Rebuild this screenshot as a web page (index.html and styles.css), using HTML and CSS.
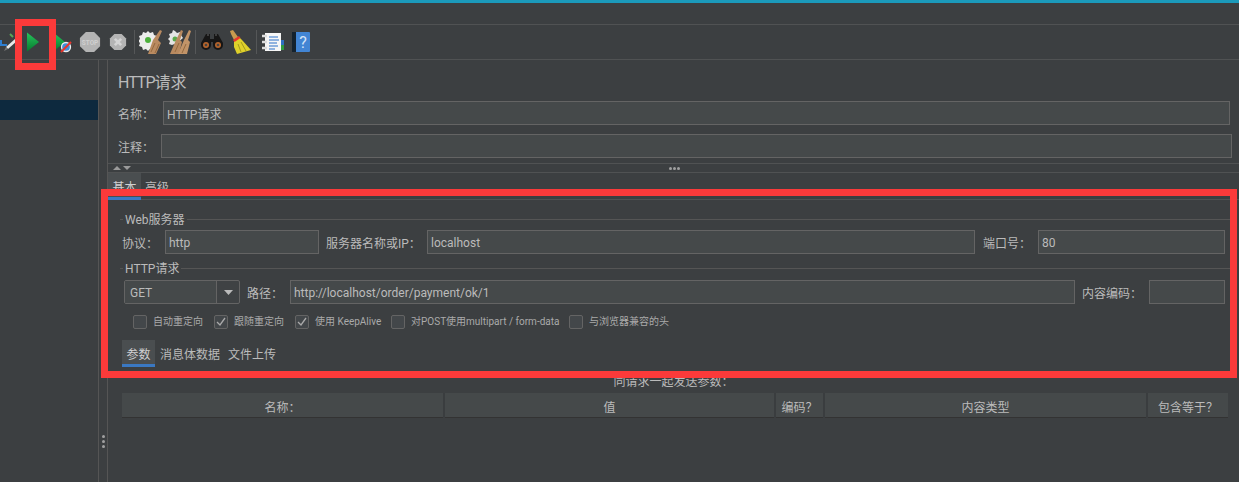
FILE: index.html
```html
<!DOCTYPE html>
<html lang="zh">
<head>
    <meta charset="UTF-8">
    <title>HTTP请求</title>
    <link rel="stylesheet" href="styles.css">
</head>
<body>

<div class="topbar"></div>
<div class="menubar"></div>

<div class="toolbar">
    <span class="tool tool-first">
        <svg width="22" height="22" viewBox="0 0 22 22"><path d="M11 16l9-8 2 2-9 8z" fill="#e8e8e8"/><path d="M20 8l2-2 2 2-2 2z" fill="#5aa55a"/><path d="M11 16l-2 4 4-2z" fill="#777"/><path d="M6 9v5h6" fill="none" stroke="#2f7fd0" stroke-width="2"/><path d="M15 3l3 3" stroke="#5aa55a" stroke-width="2"/></svg>
    </span>
    <span class="tool">
        <svg width="22" height="22" viewBox="0 0 22 22"><defs><linearGradient id="green" x1="0" y1="0" x2="0" y2="1"><stop offset="0" stop-color="#27c45c"/><stop offset="1" stop-color="#067a2e"/></linearGradient></defs><path d="M4 1.500L16 11 4 20.500z" fill="url(#green)"/></svg>
    </span>
    <span class="tool">
        <svg width="22" height="22" viewBox="0 0 22 22"><path d="M3 2l11 9-11 9z" fill="url(#green)"/><circle cx="15" cy="16" r="4.500" fill="#3d8fdc" stroke="#eee" stroke-width="1.300"/><path d="M10 21L20 11" stroke="#e8352c" stroke-width="2"/></svg>
    </span>
    <span class="tool">
        <svg width="22" height="22" viewBox="0 0 24 24"><path d="M7.500 1h9L23 7.500v9L16.500 23h-9L1 16.500v-9z" fill="#b4b4b4"/><text x="12" y="15" class="stop-text">STOP</text></svg>
    </span>
    <span class="tool">
        <svg width="18" height="18" viewBox="0 0 20 20"><path d="M6 1h8l5 5v8l-5 5H6l-5-5V6z" fill="#b4b4b4"/><path d="M6.500 6.500l7 7m0-7l-7 7" stroke="#d4d4d4" stroke-width="3"/></svg>
    </span>
    <span class="tool-sep"></span>
    <span class="tool">
        <svg width="24" height="24" viewBox="0 0 24 24"><path d="M9 1l2 2 3-1 1 3 3 1-1 3 2 2-2 2 1 3-3 1-1 3-3-1-2 2-2-2-3 1-1-3-3-1 1-3-2-2 2-2-1-3 3-1 1-3 3 1z" fill="#ececec"/><circle cx="9" cy="10" r="3" fill="#4caf3c"/><path d="M21 0l2 1-4 9 3 3-5 11H9l5-14z" fill="#b98a60"/><path d="M12 22l4-9m0 10l4-9" stroke="#94693f"/></svg>
    </span>
    <span class="tool">
        <svg width="24" height="24" viewBox="0 0 24 24"><path d="M8 1l2 2 3-1 1 3 2 3-6 5-5 2-3-1 1-3-2-2 2-2-1-3 3-1 1-3z" fill="#e4e4e4"/><circle cx="8" cy="9" r="2.500" fill="#5aa84a"/><path d="M14 0l2 1-3 9 2 2-3 12H3l6-14z" fill="#b98a60"/><path d="M22 0l2 1-3 9 2 2-3 12h-9l6-14z" fill="#c29468"/><path d="M8 22l4-9m3 10l4-9" stroke="#94693f"/></svg>
    </span>
    <span class="tool-sep"></span>
    <span class="tool">
        <svg width="24" height="16" viewBox="0 0 24 16"><path d="M6 0h4v5h4V0h4l5 9v2a5 5 0 0 1-10 0V8h-2v3a5 5 0 0 1-10 0V9z" fill="#161616"/><path d="M7 1h2M15 1h2" stroke="#666"/><circle cx="6" cy="11" r="3" fill="#b4642c"/><circle cx="18" cy="11" r="3" fill="#b4642c"/><circle cx="6" cy="11" r="1.300" fill="#444"/><circle cx="18" cy="11" r="1.300" fill="#444"/></svg>
    </span>
    <span class="tool">
        <svg width="22" height="24" viewBox="0 0 22 24"><path d="M1 1l3-1 5 7-4 3-3-6z" fill="#c89a4e"/><path d="M5 10l5-3 3 3 9 10-14 4-3-7z" fill="#dfd02a"/><path d="M4 10l6-4 1.500 2-6 4z" fill="#e8352c"/><path d="M9 14l3 8m0-10l5 9" stroke="#a49a1c"/></svg>
    </span>
    <span class="tool-sep"></span>
    <span class="tool">
        <svg width="22" height="20" viewBox="0 0 22 20"><rect x="3" y="1" width="16" height="18" fill="#f6f6f6"/><path d="M7 5h9M7 8h10M7 11h8M7 14h9M7 17h6" stroke="#2a70c8" stroke-width="1.200"/><path d="M0 4h5M0 10h5M0 16h5" stroke="#dcdcdc" stroke-width="2.500"/><rect x="19" y="8" width="3" height="5" fill="#2f6fc0"/><rect x="19" y="13" width="3" height="5" fill="#2f9a3f"/></svg>
    </span>
    <span class="tool">
        <svg width="18" height="20" viewBox="0 0 18 20"><rect x="0" y="0" width="18" height="20" rx="1" fill="#4285d4"/><rect x="0" y="0" width="4" height="20" fill="#14222e"/><text x="11" y="16" class="help-text">?</text></svg>
    </span>
</div>

<div class="workspace">
    <div class="tree">
        <div class="tree-selected"></div>
    </div>
    <div class="vsplit">
        <span class="grip"></span>
        <span class="grip"></span>
        <span class="grip"></span>
    </div>

    <div class="main">
        <div class="title"><span class="title-latin">HTTP</span>请求</div>

        <div class="name-row">
            <label class="name-label">名称：</label>
            <input class="field grow" value="HTTP请求">
        </div>
        <div class="comment-row">
            <label class="comment-label">注释：</label>
            <input class="field grow">
        </div>

        <div class="hsplit">
            <svg class="split-arrows" width="20" height="6" viewBox="0 0 20 6"><path d="M1 5l4-4 4 4zM11 1h8l-4 4z" fill="#9a9a9a"/></svg>
            <span class="split-dots">
                <span class="grip"></span>
                <span class="grip"></span>
                <span class="grip"></span>
            </span>
        </div>

        <div class="tabs top-tabs">
            <span class="tab active">基本</span>
            <span class="tab">高级</span>
        </div>

        <div class="legend legend-web"><span>Web服务器</span></div>
        <div class="form-row">
            <label class="lbl-proto">协议：</label>
            <input class="field f-proto" value="http">
            <label class="lbl-server">服务器名称或IP：</label>
            <input class="field f-server" value="localhost">
            <label class="lbl-port">端口号：</label>
            <input class="field f-port" value="80">
        </div>

        <div class="legend legend-http"><span>HTTP请求</span></div>
        <div class="form-row row-path">
            <div class="select">
                <span class="select-value">GET</span>
                <span class="select-btn"><svg width="9" height="5" viewBox="0 0 9 5"><path d="M0 0h9L4.500 5z" fill="#bbb"/></svg></span>
            </div>
            <label class="lbl-path">路径：</label>
            <input class="field f-path" value="http://localhost/order/payment/ok/1">
            <label class="lbl-enc">内容编码：</label>
            <input class="field f-enc">
        </div>

        <div class="checks">
            <span class="check c1"><span class="box"></span>自动重定向</span>
            <span class="check c2"><span class="box"><svg width="10" height="10" viewBox="0 0 10 10"><path d="M1 5l3 3 5-7" fill="none" stroke="#aaa" stroke-width="1.300"/></svg></span>跟随重定向</span>
            <span class="check c3"><span class="box"><svg width="10" height="10" viewBox="0 0 10 10"><path d="M1 5l3 3 5-7" fill="none" stroke="#aaa" stroke-width="1.300"/></svg></span>使用 KeepAlive</span>
            <span class="check c4"><span class="box"></span>对POST使用multipart / form-data</span>
            <span class="check"><span class="box"></span>与浏览器兼容的头</span>
        </div>

        <div class="tabs sub-tabs">
            <span class="tab active">参数</span>
            <span class="tab">消息体数据</span>
            <span class="tab">文件上传</span>
        </div>

        <div class="args-title">同请求一起发送参数：</div>
        <table class="args">
            <thead>
                <tr>
                    <th class="col-name">名称：</th>
                    <th class="col-value">值</th>
                    <th class="col-enc">编码？</th>
                    <th class="col-type">内容类型</th>
                    <th>包含等于？</th>
                </tr>
            </thead>
        </table>
    </div>
</div>

<!-- red marks drawn over the screenshot -->
<div class="mark mark-run"></div>
<div class="mark mark-form"></div>

</body>
</html>
```

FILE: styles.css
```css
* {
    box-sizing: border-box;
}
body {
    margin: 0;
    height: 482px;
    overflow: hidden;
    position: relative;
    background-color: #3c3f41;
    color: #bbbbbb;
    font-family: Roboto, "Noto Sans CJK SC", sans-serif;
    font-size: 12px;
}
label {
    padding-top: 1px;
}
.topbar {
    height: 3px;
    background-color: #1b9abb;
}
.menubar {
    height: 22px;
    border-bottom: 1px solid #505253;
}
.toolbar {
    height: 35px;
    display: flex;
    align-items: center;
    border-bottom: 1px solid #505253;
    overflow: hidden;
}
.tool {
    width: 28px;
    flex: none;
    display: flex;
    justify-content: center;
    align-items: center;
}
.tool-first {
    margin-left: -8px;
}
.tool-sep {
    width: 1px;
    height: 24px;
    margin: 0 2px 0 2px;
    background-color: #555758;
}
.stop-text {
    font-size: 7px;
    font-weight: bold;
    fill: #d0d0d0;
    text-anchor: middle;
}
.help-text {
    font-size: 16px;
    fill: #d4e4f8;
    text-anchor: middle;
}

.workspace {
    display: flex;
    height: 422px;
}
.tree {
    width: 98px;
    padding-top: 40px;
}
.tree-selected {
    height: 20px;
    background-color: #0d293e;
}
.vsplit {
    width: 10px;
    border-left: 1px solid #555555;
    border-right: 1px solid #555555;
    padding-bottom: 34px;
    display: flex;
    flex-direction: column;
    justify-content: flex-end;
    align-items: center;
    gap: 2px;
}
.grip {
    width: 3px;
    height: 3px;
    border-radius: 50%;
    background-color: #a0a0a0;
}
.main {
    flex: 1;
    min-width: 0;
}
.title {
    height: 41px;
    padding: 13px 0 0 10px;
    font-size: 16px;
    line-height: 20px;
}
.title-latin {
    letter-spacing: -1px;
}
.field {
    height: 24px;
    padding: 1px 3px 0;
    background-color: #45494a;
    border: 1px solid #646464;
    color: #bbbbbb;
    font-family: inherit;
    font-size: 12px;
    outline: none;
}
.grow {
    flex: 1;
    min-width: 0;
}
.name-row,
.comment-row {
    display: flex;
    align-items: center;
    margin-left: 10px;
}
.name-row {
    margin-right: 9px;
}
.name-label {
    width: 45px;
}
.comment-row {
    margin-top: 9px;
    margin-right: 7px;
}
.comment-label {
    width: 43px;
}
.hsplit {
    height: 10px;
    margin-top: 5px;
    border-top: 1px solid #505253;
    border-bottom: 1px solid #505253;
    display: flex;
    align-items: center;
    padding-left: 4px;
}
.split-dots {
    display: flex;
    gap: 1px;
    margin-left: 537px;
}
.tabs {
    display: flex;
}
.tab {
    display: block;
    line-height: 18px;
    padding-top: 6px;
    font-size: 12px;
}
.tab.active {
    background-color: #4a4e50;
    border-bottom: 3px solid #3a78c2;
    color: #d0d0d0;
}
.top-tabs {
    height: 27px;
    border-bottom: 1px solid #505253;
}
.top-tabs .tab {
    height: 27px;
    padding: 6px 4px 0;
    width: 33px;
    text-align: center;
}
.top-tabs .tab + .tab {
    width: auto;
    padding-left: 4px;
}
.legend {
    height: 14px;
    margin: 12px 9px 0 12px;
    display: flex;
    align-items: center;
    gap: 2px;
    line-height: 14px;
}
.legend span {
    padding-top: 1px;
}
.legend::before {
    content: "";
    width: 3px;
    height: 1px;
    background-color: #555555;
}
.legend::after {
    content: "";
    flex: 1;
    height: 1px;
    background-color: #555555;
}
.legend-http {
    margin-top: 7px;
}
.form-row {
    display: flex;
    align-items: center;
    margin-top: 4px;
    margin-left: 14px;
}
.lbl-proto {
    width: 43px;
}
.f-proto {
    width: 154px;
}
.lbl-server {
    margin-left: 7px;
    width: 101px;
}
.f-server {
    width: 548px;
}
.lbl-port {
    margin-left: 8px;
    width: 55px;
}
.f-port {
    width: 187px;
}
.row-path {
    margin-top: 5px;
    margin-left: 16px;
}
.select {
    width: 116px;
    height: 24px;
    display: flex;
    border: 1px solid #646464;
    border-radius: 2px;
    background-color: #3f4244;
}
.select-value {
    flex: 1;
    line-height: 24px;
    padding-left: 5px;
    background-color: #45494a;
}
.select-btn {
    width: 23px;
    border-left: 1px solid #646464;
    display: flex;
    align-items: center;
    justify-content: center;
}
.lbl-path {
    margin-left: 7px;
    width: 43px;
}
.f-path {
    width: 785px;
}
.lbl-enc {
    margin-left: 7px;
    width: 67px;
}
.f-enc {
    width: 76px;
}
.checks {
    display: flex;
    align-items: center;
    height: 14px;
    margin: 11px 0 0 25px;
    font-size: 10px;
    color: #aaaaaa;
}
.check {
    display: flex;
    align-items: center;
    line-height: 14px;
}
.c1 {
    width: 81px;
}
.c2 {
    width: 81px;
}
.c3 {
    width: 96px;
}
.c4 {
    width: 178px;
}
.box {
    width: 14px;
    height: 14px;
    margin-right: 6px;
    flex: none;
    background-color: #43474a;
    border: 1px solid #646464;
    border-radius: 2px;
    display: flex;
    align-items: center;
    justify-content: center;
}
.sub-tabs {
    height: 27px;
    margin: 11px 0 0 14px;
    gap: 5px;
}
.sub-tabs .tab {
    height: 27px;
}
.sub-tabs .tab.active {
    width: 33px;
    text-align: center;
}
.sub-tabs .tab + .tab + .tab {
    margin-left: 3px;
}
.args-title {
    height: 26px;
    line-height: 30px;
    text-align: center;
}
.args {
    width: 1106px;
    height: 25px;
    margin-left: 14px;
    border-collapse: collapse;
    table-layout: fixed;
}
.args th {
    padding: 2px 0 0;
    font-weight: normal;
    font-size: 12px;
    color: #bbbbbb;
    background-color: #45494a;
    border-right: 2px solid #3a3d3f;
    border-bottom: 1px solid #333333;
}
.args th:last-child {
    border-right: none;
}
.col-name {
    width: 322px;
}
.col-value {
    width: 331px;
}
.col-enc {
    width: 49px;
}
.col-type {
    width: 323px;
}

.mark {
    position: absolute;
    border: 7px solid #fb3a3a;
}
.mark-run {
    left: 15px;
    top: 19px;
    width: 41px;
    height: 51px;
}
.mark-form {
    left: 101px;
    top: 189px;
    width: 1136px;
    height: 189px;
}
```
